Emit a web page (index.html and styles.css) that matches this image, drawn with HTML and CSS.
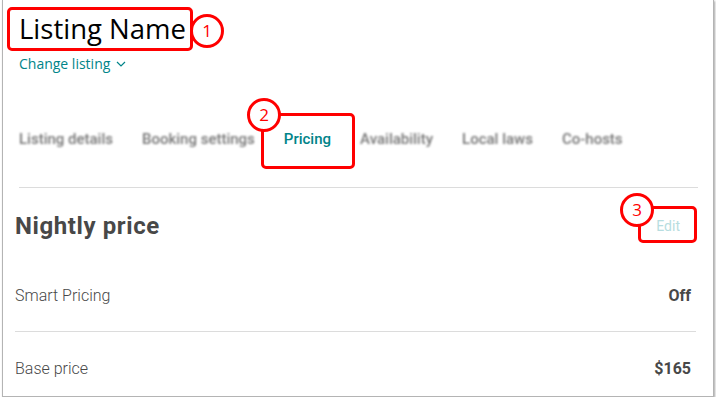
FILE: index.html
```html
<!DOCTYPE html>
<html lang="en">
<head>
    <meta charset="UTF-8">
    <title>Listing Pricing</title>
    <link rel="stylesheet" href="styles.css">
</head>
<body>
    <div class="frame">
        <div class="header">
            <h1 class="listing-name">Listing Name</h1>
            <a class="change-listing" href="#">Change listing
                <svg class="chevron" width="10" height="6" viewBox="0 0 10 6"><path d="M1 1l4 4 4-4" fill="none" stroke="currentColor" stroke-width="1.2"/></svg>
            </a>
        </div>

        <nav class="tabs">
            <span class="tab blurred">Listing details</span>
            <span class="tab blurred">Booking settings</span>
            <span class="tab active">Pricing</span>
            <span class="tab blurred">Availability</span>
            <span class="tab blurred">Local laws</span>
            <span class="tab blurred">Co-hosts</span>
        </nav>

        <div class="section">
            <div class="section-head">
                <h2 class="section-title">Nightly price</h2>
                <span class="edit-link">Edit</span>
            </div>
            <div class="row">
                <span class="row-label">Smart Pricing</span>
                <span class="row-value">Off</span>
            </div>
            <div class="row">
                <span class="row-label">Base price</span>
                <span class="row-value">$165</span>
            </div>
        </div>

        <!-- annotation overlays -->
        <div class="mark-box box-1"></div>
        <div class="mark-num num-1">1</div>
        <div class="mark-box box-2"></div>
        <div class="mark-num num-2">2</div>
        <div class="mark-box box-3"></div>
        <div class="mark-num num-3">3</div>
    </div>
</body>
</html>
```

FILE: styles.css
```css
body {
    margin: 0;
    background: #fff;
    font-family: Roboto, "Noto Sans", sans-serif;
    color: #484848;
}

.frame {
    position: relative;
    margin-left: 2px;
    width: 710px;
    height: 396px;
    border: 1px solid #b4b4b4;
    border-top: none;
    box-shadow: 1px 1px 2px rgba(0,0,0,0.35);
    background: #fff;
    overflow: hidden;
}

.header {
    padding: 9px 0 0 16px;
}

.listing-name {
    margin: 0;
    font-family: "Open Sans", sans-serif;
    font-weight: 400;
    font-size: 27.5px;
    line-height: 40px;
    color: #000;
}

.change-listing {
    display: inline-flex;
    align-items: center;
    gap: 6px;
    margin-top: 5px;
    font-family: "Open Sans", sans-serif;
    font-size: 14px;
    font-weight: 500;
    color: #008489;
    text-decoration: none;
}

.chevron {
    margin-top: 1px;
}

.tabs {
    display: flex;
    gap: 29px;
    margin: 0 15px 0 16px;
    padding: 56px 0 38px;
    border-bottom: 1px solid #dcdcdc;
    font-size: 15px;
    font-weight: 500;
}

.tab {
    color: #767676;
    line-height: 20px;
}

.tab.blurred {
    filter: blur(1.3px);
}

.tab.active {
    color: #008489;
}

.section {
    padding: 0 17px 0 12px;
}

.section-head {
    display: flex;
    justify-content: space-between;
    align-items: center;
    padding: 24px 0 19px;
}

.section-title {
    margin: 0;
    font-size: 24px;
    font-weight: 700;
    letter-spacing: 0.6px;
    line-height: 28px;
    color: #484848;
}

.edit-link {
    margin-right: 16px;
    font-size: 14px;
    color: #b7dde0;
}

.row {
    display: flex;
    justify-content: space-between;
    align-items: center;
    height: 72px;
    font-size: 16px;
}

.row + .row {
    border-top: 1px solid #dcdcdc;
}

.row-label {
    font-weight: 300;
}

.row-value {
    margin-right: 5px;
    font-weight: 700;
}

/* red callout marks */
.mark-box {
    position: absolute;
    border: 3px solid #f00;
    border-radius: 5px;
}

.box-1 { left: 4px;   top: 7px;   width: 180px; height: 38px; }
.box-2 { left: 258px; top: 113px; width: 88px;  height: 50px; }
.box-3 { left: 635px; top: 206px; width: 53px;  height: 31px; }

.mark-num {
    position: absolute;
    width: 28px;
    height: 28px;
    border: 3px solid #f00;
    border-radius: 50%;
    background: #fff;
    color: #f00;
    font-family: "Open Sans", sans-serif;
    font-size: 17px;
    line-height: 28px;
    text-align: center;
}

.num-1 { left: 187px; top: 14px; }
.num-2 { left: 244px; top: 98px; }
.num-3 { left: 617px; top: 193px; }
```
